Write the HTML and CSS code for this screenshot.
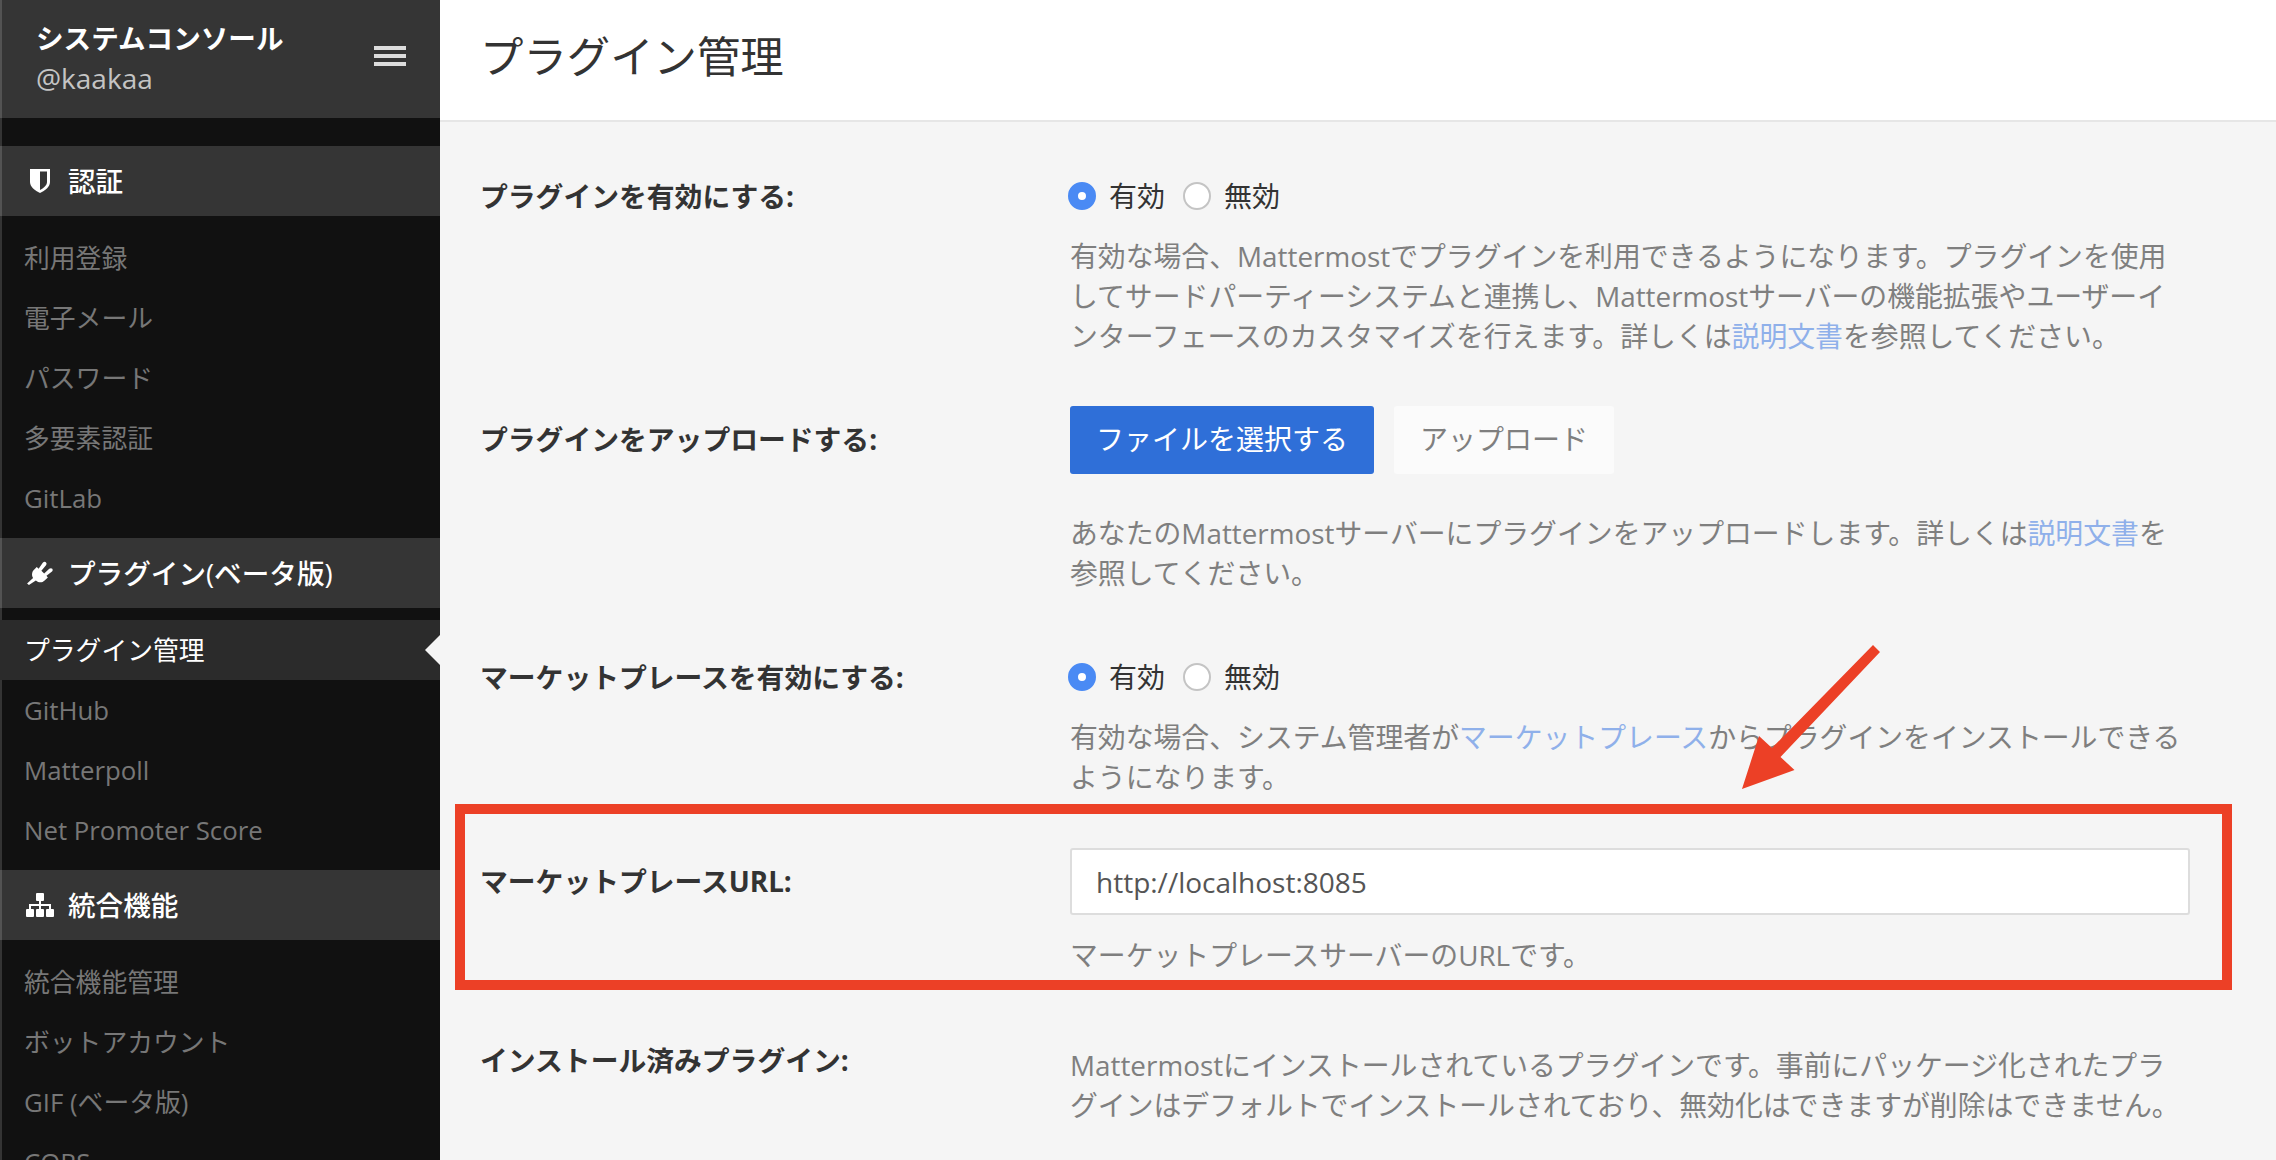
FILE: index.html
```html
<!DOCTYPE html>
<html lang="ja">
<head>
    <meta charset="UTF-8">
    <meta name="viewport" content="width=device-width, initial-scale=1.0">
    <title>プラグイン管理</title>
    <link rel="stylesheet" href="styles.css">
</head>
<body>
    <div class="page">
        <aside class="sidebar">
            <div class="sidebar-header">
                <div class="console-info">
                    <div class="console-title">システムコンソール</div>
                    <div class="console-user">@kaakaa</div>
                </div>
                <div class="menu-icon"><span></span><span></span><span></span></div>
            </div>

            <div class="section-title first">
                <svg class="section-icon" viewBox="0 0 28 24">
                    <path fill="#fff" d="M4 0H24V13C24 18 19 21.500 14 24C9 21.500 4 18 4 13Z"/>
                    <path fill="#353535" d="M14 2.500H21V13C21 16.500 17.500 19 14 21Z"/>
                </svg>
                認証
            </div>
            <ul class="menu first-menu">
                <li>利用登録</li>
                <li>電子メール</li>
                <li>パスワード</li>
                <li>多要素認証</li>
                <li>GitLab</li>
            </ul>

            <div class="section-title">
                <svg class="section-icon" viewBox="0 0 28 26">
                    <path fill="#fff" d="M0 24.500L6.500 18.500C4.500 15 5.500 11.500 7.500 9.500L10.500 6.500L12.500 8.500L17 2C18 .5 20 .5 20.500 1.500C21.500 2.500 21 3.500 20.500 4.500L15.500 10.500L18.500 13.500L24 8.500C25 7.500 26.500 7.500 27.300 8.300C28 9.300 27.800 10.500 27 11.500L21 16L22.500 18L19 21C16 24 12.500 23.500 9.500 21L2 26Z"/>
                </svg>
                プラグイン(ベータ版)
            </div>
            <ul class="menu plugin-menu">
                <li class="active">プラグイン管理</li>
                <li>GitHub</li>
                <li>Matterpoll</li>
                <li>Net Promoter Score</li>
            </ul>

            <div class="section-title">
                <svg class="section-icon" viewBox="0 0 28 24">
                    <g fill="#fff">
                        <rect x="10" y="0" width="8" height="8" rx="1"/>
                        <rect x="0" y="16" width="8" height="8" rx="1"/>
                        <rect x="10" y="16" width="8" height="8" rx="1"/>
                        <rect x="20" y="16" width="8" height="8" rx="1"/>
                        <rect x="13" y="8" width="2" height="8"/>
                        <rect x="3" y="11" width="22" height="2"/>
                        <rect x="3" y="11" width="2" height="5"/>
                        <rect x="23" y="11" width="2" height="5"/>
                    </g>
                </svg>
                統合機能
            </div>
            <ul class="menu">
                <li>統合機能管理</li>
                <li>ボットアカウント</li>
                <li>GIF (ベータ版)</li>
                <li>CORS</li>
            </ul>
        </aside>

        <main class="content">
            <header class="page-header">プラグイン管理</header>

            <div class="settings">
                <div class="setting setting-plugins">
                    <label class="setting-label">プラグインを有効にする:</label>
                    <div>
                        <div class="radio-row">
                            <span class="radio checked"></span>有効
                            <span class="radio"></span>無効
                        </div>
                        <p class="help">有効な場合、Mattermostでプラグインを利用できるようになります。プラグインを使用<br>してサードパーティーシステムと連携し、Mattermostサーバーの機能拡張やユーザーイ<br>ンターフェースのカスタマイズを行えます。詳しくは<a href="#">説明文書</a>を参照してください。</p>
                    </div>
                </div>

                <div class="setting setting-upload">
                    <label class="setting-label label-tall">プラグインをアップロードする:</label>
                    <div>
                        <div class="btn-row">
                            <button class="btn btn-primary">ファイルを選択する</button>
                            <button class="btn btn-light">アップロード</button>
                        </div>
                        <p class="help help-far">あなたのMattermostサーバーにプラグインをアップロードします。詳しくは<a href="#">説明文書</a>を<br>参照してください。</p>
                    </div>
                </div>

                <div class="setting setting-market">
                    <label class="setting-label">マーケットプレースを有効にする:</label>
                    <div>
                        <div class="radio-row">
                            <span class="radio checked"></span>有効
                            <span class="radio"></span>無効
                        </div>
                        <p class="help">有効な場合、システム管理者が<a href="#">マーケットプレース</a>からプラグインをインストールできる<br>ようになります。</p>
                    </div>
                </div>

                <div class="setting setting-url">
                    <label class="setting-label label-tall">マーケットプレースURL:</label>
                    <div>
                        <input class="url-input" type="text" value="http://localhost:8085">
                        <p class="help">マーケットプレースサーバーのURLです。</p>
                    </div>
                </div>

                <div class="setting setting-installed">
                    <label class="setting-label">インストール済みプラグイン:</label>
                    <div>
                        <p class="help help-flush">Mattermostにインストールされているプラグインです。事前にパッケージ化されたプラ<br>グインはデフォルトでインストールされており、無効化はできますが削除はできません。</p>
                    </div>
                </div>
            </div>
        </main>

        <!-- 注釈 -->
        <div class="callout-box"></div>
        <svg class="callout-arrow" viewBox="0 0 2276 1160">
            <polygon fill="#ec4026" points="1873,645 1880,652 1780.500,757 1794.500,770 1742,789 1759,736 1772,748"/>
        </svg>
    </div>
</body>
</html>
```

FILE: styles.css
```css
* {
    box-sizing: border-box;
}
html, body {
    margin: 0;
    height: 100%;
    overflow: hidden;
}
body {
    background-color: #f5f5f5;
    font-family: "Open Sans", "Noto Sans CJK JP", sans-serif;
    font-size: 28px;
    line-height: 40px;
    color: #333;
}
.page {
    position: relative;
    display: flex;
    height: 1160px;
    overflow: hidden;
}

/* sidebar */
.sidebar {
    position: relative;
    flex: 0 0 440px;
    height: 1160px;
    overflow: hidden;
    background: #111;
}
.sidebar::before {
    content: "";
    position: absolute;
    left: 0;
    top: 0;
    bottom: 0;
    width: 2px;
    background: rgba(255, 255, 255, 0.15);
}
.sidebar-header {
    display: flex;
    align-items: center;
    justify-content: space-between;
    height: 118px;
    padding: 0 34px 0 36px;
    background: #353535;
}
.console-info {
    margin-bottom: 3px;
}
.console-title {
    font-weight: 700;
    font-size: 27.600px;
    color: #fff;
}
.console-user {
    font-size: 28px;
    color: #c4c4c4;
}
.menu-icon {
    display: flex;
    flex-direction: column;
    gap: 4px;
    width: 32px;
    margin-bottom: 6px;
}
.menu-icon span {
    height: 4px;
    background: #ddd;
}
.section-title {
    display: flex;
    align-items: center;
    height: 70px;
    padding: 0 0 0 26px;
    background: #353535;
    font-size: 27.600px;
    font-weight: 500;
    color: #fff;
}
.section-title.first {
    margin-top: 28px;
}
.section-icon {
    width: 28px;
    height: 24px;
    margin-right: 14px;
}
.menu {
    list-style: none;
    margin: 0;
    padding: 12px 0 0;
    height: 252px;
}
.first-menu {
    height: 322px;
    padding-top: 12px;
}
.plugin-menu {
    height: 262px;
    padding-top: 12px;
}
.menu li {
    height: 60px;
    line-height: 60px;
    padding-left: 24px;
    font-size: 25.800px;
    color: #777;
}
.menu li.active {
    position: relative;
    background: #2b2b2b;
    color: #fff;
}
.menu li.active::after {
    content: "";
    position: absolute;
    right: 0;
    top: 15px;
    border-style: solid;
    border-width: 15px 15px 15px 0;
    border-color: transparent #f5f5f5 transparent transparent;
}

/* main */
.content {
    flex: 1;
}
.page-header {
    height: 122px;
    padding: 0 40px;
    background: #fff;
    border-bottom: 2px solid #e6e6e6;
    font-size: 43.400px;
    line-height: 114px;
    color: #333;
}
.settings {
    padding: 54px 86px 0 40px;
}
.setting {
    display: grid;
    grid-template-columns: 590px 1fr;
    margin-bottom: 51px;
}
.setting-plugins {
    margin-bottom: 50px;
}
.setting-upload {
    margin-bottom: 64px;
}
.setting-url {
    margin-bottom: 66px;
}
.setting-label {
    font-size: 27.800px;
    font-weight: 700;
    color: #333;
}
.setting-installed .setting-label {
    line-height: 38px;
}
.label-tall {
    padding-top: 13px;
}
.radio-row {
    display: flex;
    align-items: center;
    height: 40px;
    color: #333;
}
.radio {
    width: 28px;
    height: 28px;
    margin: 0 13px 0 -2px;
    border-radius: 50%;
    background: #fff;
    border: 2px solid #c4c4c4;
}
.radio ~ .radio {
    margin-left: 18px;
}
.radio.checked {
    background: #fff;
    border: 10px solid #4a8af4;
}
.help {
    margin: 20px 0 0;
    font-size: 27.850px;
    color: #7f7f7f;
}
.help a {
    color: #8fb0ea;
    text-decoration: none;
}
.help-far {
    margin-top: 39px;
}
.help-flush {
    margin-top: 0;
    position: relative;
    top: 4px;
}
.btn-row {
    display: flex;
    gap: 20px;
}
.btn {
    height: 68px;
    padding: 0 0 5px;
    border: 0;
    border-radius: 3px;
    font-family: inherit;
    font-size: 28px;
}
.btn-primary {
    width: 304px;
    background: #2f6fd8;
    color: #fff;
}
.btn-light {
    width: 220px;
    background: #fbfbfb;
    color: #7f7f7f;
}
.url-input {
    display: block;
    width: 1120px;
    height: 67px;
    padding: 0 24px;
    border: 2px solid #ddd;
    border-radius: 3px;
    background: #fff;
    font-family: inherit;
    font-size: 28px;
    color: #555;
}

/* annotation */
.callout-box {
    position: absolute;
    left: 455px;
    top: 804px;
    width: 1777px;
    height: 186px;
    border: 10px solid #ec4026;
}
.callout-arrow {
    position: absolute;
    left: 0;
    top: 0;
    width: 2276px;
    height: 1160px;
    pointer-events: none;
}
```
